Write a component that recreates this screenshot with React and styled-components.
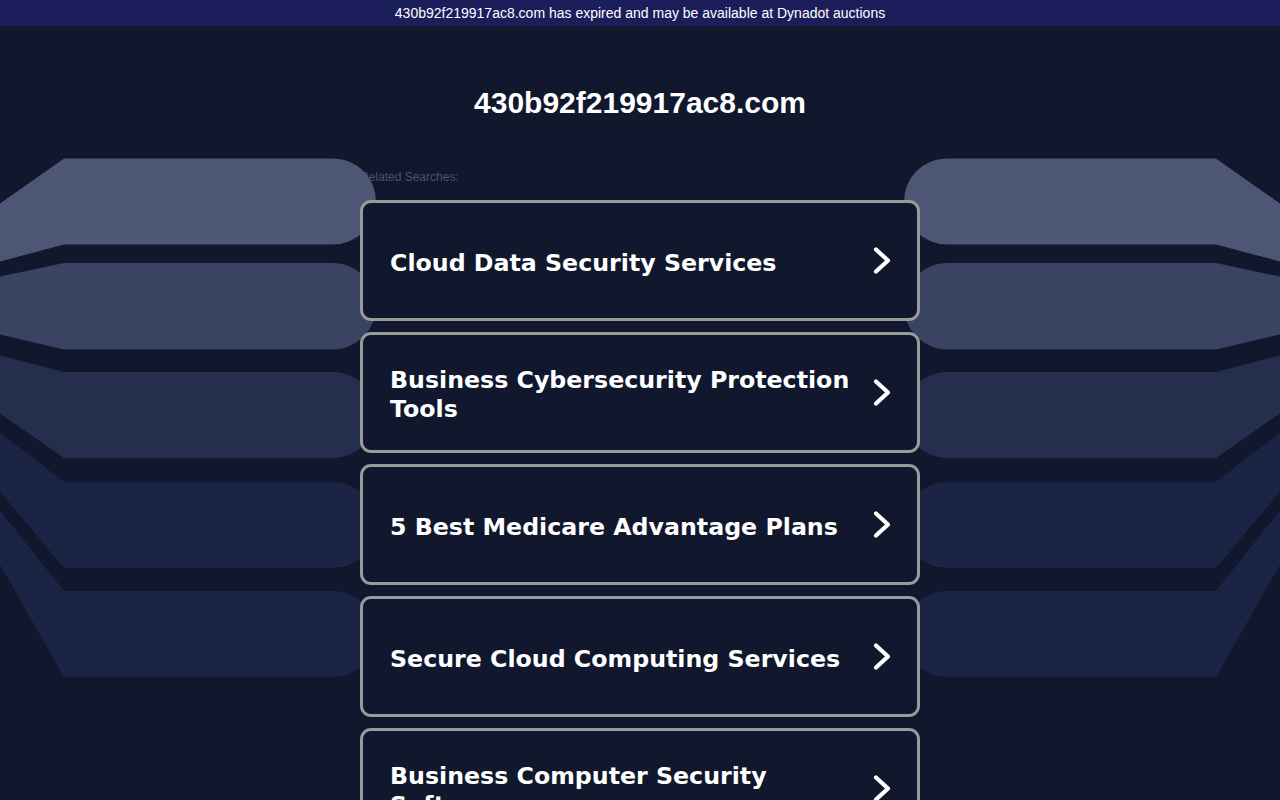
import React from "react";
import styled, { createGlobalStyle } from "styled-components";

const GlobalStyle = createGlobalStyle`
  html, body {
    margin: 0;
    padding: 0;
    background: #11172c;
  }
  body {
    font-family: "Liberation Sans", Arial, sans-serif;
    overflow: hidden;
  }
`;

const Page = styled.div`
  position: relative;
  width: 1280px;
  height: 800px;
  overflow: hidden;
  background: #11172c;
`;

const TopBar = styled.div`
  height: 26px;
  line-height: 26px;
  background: #1b1e5b;
  color: #ffffff;
  font-size: 14px;
  text-align: center;
`;

const Title = styled.h1`
  margin: 59px 0 0;
  font-family: "Liberation Sans", Arial, sans-serif;
  font-weight: 700;
  font-size: 30px;
  line-height: 36px;
  color: #ffffff;
  text-align: center;
`;

const Column = styled.main`
  width: 560px;
  margin: 0 auto;
  display: flex;
  flex-direction: column;
`;

const Label = styled.div`
  margin-top: 49px;
  height: 14px;
  line-height: 14px;
  font-size: 12px;
  color: #4a5275;
  margin-bottom: 16px;
`;

const List = styled.div`
  display: flex;
  flex-direction: column;
  gap: 11px;
  position: relative;
  z-index: 2;
`;

const Card = styled.a`
  box-sizing: border-box;
  height: 121px;
  border: 3px solid #9a9a9a;
  border-radius: 11px;
  background: #11172c;
  display: flex;
  align-items: center;
  justify-content: space-between;
  gap: 10px;
  padding: 5px 24px 0 27px;
  text-decoration: none;
  flex-shrink: 0;
`;

const CardText = styled.span`
  font-family: "DejaVu Sans", Verdana, sans-serif;
  font-weight: 700;
  font-size: 23.7px;
  line-height: 29px;
  color: #ffffff;
`;

const Decor = styled.svg`
  position: absolute;
  top: 0;
  left: 0;
  z-index: 1;
  pointer-events: none;
`;

const bands = [
  { t: 158.5, b: 244.5, l1: 205, l2: 262, fill: "#4d5674", dots: false },
  { t: 263, b: 349.5, l1: 277, l2: 334, fill: "#3a4362", dots: false },
  { t: 372, b: 458, l1: 355, l2: 412, fill: "#262e4e", dots: false },
  { t: 482, b: 568, l1: 431, l2: 489, fill: "#1c2446", dots: true },
  { t: 591, b: 677, l1: 508, l2: 561, fill: "#1c2446", dots: true },
];

function leftPath({ t, b, l1, l2 }) {
  const r = (b - t) / 2;
  return `M -2 ${l1} L 64 ${t} L ${376 - r} ${t} A ${r} ${r} 0 0 1 ${376 - r} ${b} L 64 ${b} L -2 ${l2} Z`;
}

function Background() {
  return (
    <Decor width="1280" height="800" viewBox="0 0 1280 800">
      <defs>
        <pattern id="dots" width="4" height="4" patternUnits="userSpaceOnUse">
          <rect width="4" height="4" fill="#1b2344" />
          <rect x="1" y="1" width="1" height="1" fill="#252e52" />
        </pattern>
      </defs>
      {bands.map((band, i) => (
        <g key={i}>
          <path d={leftPath(band)} fill={band.dots ? "url(#dots)" : band.fill} />
          <path
            d={leftPath(band)}
            transform="translate(1280 0) scale(-1 1)"
            fill={band.dots ? "url(#dots)" : band.fill}
          />
        </g>
      ))}
    </Decor>
  );
}

function Chevron() {
  return (
    <svg width="21" height="31" viewBox="0 0 21 31" style={{ flexShrink: 0, marginTop: -5 }}>
      <path
        d="M4 4.5 L16 15.5 L4 26.5"
        fill="none"
        stroke="#ffffff"
        strokeWidth="4.2"
        strokeLinecap="round"
        strokeLinejoin="round"
      />
    </svg>
  );
}

const items = [
  "Cloud Data Security Services",
  "Business Cybersecurity Protection Tools",
  "5 Best Medicare Advantage Plans",
  "Secure Cloud Computing Services",
  "Business Computer Security Software",
];

export default function App() {
  return (
    <Page>
      <GlobalStyle />
      <TopBar>430b92f219917ac8.com has expired and may be available at Dynadot auctions</TopBar>
      <Title>430b92f219917ac8.com</Title>
      <Column>
        <Label>Related Searches:</Label>
        <List>
          {items.map((it) => (
            <Card key={it} href="#">
              <CardText>{it}</CardText>
              <Chevron />
            </Card>
          ))}
        </List>
      </Column>
      <Background />
    </Page>
  );
}
